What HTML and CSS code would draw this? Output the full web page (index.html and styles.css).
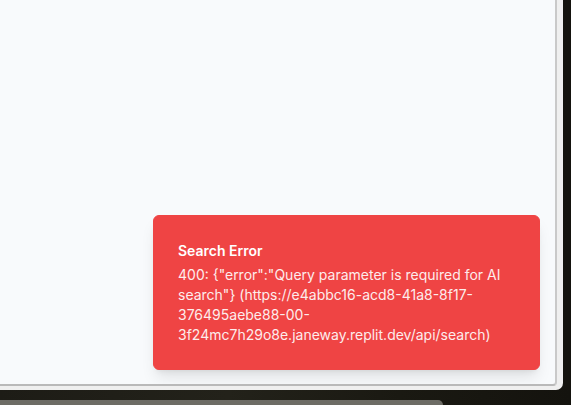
FILE: index.html
```html
<!DOCTYPE html>
<html>
<head>
<meta charset="utf-8">
<link rel="stylesheet" href="styles.css">
</head>
<body>
<div class="screen">
  <div class="window">
    <div class="viewport">
      <div class="toast-region">
        <div class="toast">
          <div class="toast-title">Search Error</div>
          <div class="toast-desc">400: {"error":"Query parameter is required for AI search"} (https://e4abbc16-acd8-41a8-8f17-376495aebe88-00-3f24mc7h29o8e.janeway.replit.dev/api/search)</div>
        </div>
      </div>
    </div>
  </div>
  <div class="dock"></div>
</div>
</body>
</html>
```

FILE: styles.css
```css
html, body {
  margin: 0;
  padding: 0;
  width: 571px;
  height: 405px;
  overflow: hidden;
}
body {
  background: linear-gradient(90deg, #1d1c16 0%, #23221a 40%, #1a1912 70%, #14130e 100%);
  font-family: Inter, "Noto Sans", sans-serif;
}
.screen {
  display: flex;
  flex-direction: column;
  height: 405px;
}
.window {
  width: 563px;
  height: 390px;
  box-sizing: border-box;
  background: #efefef;
  border-bottom-right-radius: 7px;
  padding: 0 6px 4px 0;
}
.viewport {
  position: relative;
  width: 557px;
  height: 386px;
  box-sizing: border-box;
  background: #f8fafc;
  border-right: 2px solid #c9c9c9;
  border-bottom: 2px solid #b9b9b9;
  border-bottom-right-radius: 4px;
  overflow: hidden;
}
.toast-region {
  position: absolute;
  right: 0;
  bottom: 0;
  width: 418px;
  box-sizing: border-box;
  padding: 15px 15px 14px 16px;
}
.toast {
  background: #ef4444;
  border: 1px solid #ef4444;
  border-radius: 6px;
  padding: 25px 32px 24px 24px;
  color: #ffffff;
  box-shadow: 0 10px 15px -3px rgba(0,0,0,0.1), 0 4px 6px -4px rgba(0,0,0,0.1);
  display: flex;
  flex-direction: column;
  gap: 4px;
}
.toast-title {
  font-size: 14px;
  line-height: 20px;
  font-weight: 600;
}
.toast-desc {
  font-size: 14px;
  line-height: 20px;
  opacity: 0.9;
}
.dock {
  margin-top: 10px;
  width: 443px;
  height: 20px;
  background: #6d6c65;
  border-top-right-radius: 14px;
}
```
